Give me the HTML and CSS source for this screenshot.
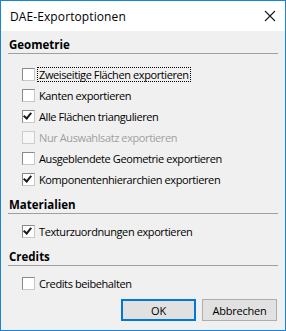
FILE: index.html
```html
<!DOCTYPE html>
<html lang="de">
<head>
    <meta charset="UTF-8">
    <title>DAE-Exportoptionen</title>
    <link rel="stylesheet" href="styles.css">
</head>
<body>
    <div class="window">
        <div class="titlebar">
            <span class="title">DAE-Exportoptionen</span>
            <svg class="close" width="12" height="12" viewBox="0 0 12 12">
                <path d="M1 1 L11 11 M11 1 L1 11" stroke="#1a1a1a" stroke-width="1.1" fill="none"/>
            </svg>
        </div>

        <div class="content">
            <div class="group first">
                <div class="group-title">Geometrie</div>
                <div class="options">
                    <label class="option"><span class="box"></span><span class="text focus">Zweiseitige Flächen exportieren</span></label>
                    <label class="option"><span class="box"></span><span class="text">Kanten exportieren</span></label>
                    <label class="option"><span class="box checked"></span><span class="text">Alle Flächen triangulieren</span></label>
                    <label class="option disabled"><span class="box"></span><span class="text">Nur Auswahlsatz exportieren</span></label>
                    <label class="option"><span class="box"></span><span class="text">Ausgeblendete Geometrie exportieren</span></label>
                    <label class="option"><span class="box checked"></span><span class="text">Komponentenhierarchien exportieren</span></label>
                </div>
            </div>

            <div class="group">
                <div class="group-title">Materialien</div>
                <div class="options">
                    <label class="option"><span class="box checked"></span><span class="text">Texturzuordnungen exportieren</span></label>
                </div>
            </div>

            <div class="group">
                <div class="group-title">Credits</div>
                <div class="options">
                    <label class="option"><span class="box"></span><span class="text">Credits beibehalten</span></label>
                </div>
            </div>

            <div class="buttons">
                <button class="btn default">OK</button>
                <button class="btn">Abbrechen</button>
            </div>
        </div>
    </div>
</body>
</html>
```

FILE: styles.css
```css
*{
    margin: 0;
    padding: 0;
    box-sizing: border-box;
}

body{
    font-family: "Open Sans", "Noto Sans", sans-serif;
    font-size: 11px;
    color: #000;
    background: #f0f0f0;
}

.window{
    width: 286px;
    height: 331px;
    border: 1px solid #1883d7;
    background: #f0f0f0;
}

.titlebar{
    height: 30px;
    background: #fff;
    display: flex;
    align-items: center;
    justify-content: space-between;
    padding: 0 9px 0 9px;
}

.title{
    font-size: 12px;
    letter-spacing: 0.1px;
}

.content{
    padding: 0 7px;
}

.group-title{
    margin-top: 7px;
    height: 17px;
    line-height: 16px;
    font-weight: bold;
    font-size: 11.5px;
    padding-left: 1px;
    border-bottom: 1px solid #a0a0a0;
}

.first .group-title{
    margin-top: 6px;
}

.options{
    padding: 7px 0 0 14px;
}

.first .options{
    padding-top: 10px;
}

.option{
    height: 21px;
    display: flex;
    align-items: center;
}

.box{
    width: 13px;
    height: 13px;
    background: #fff;
    border: 1px solid #8a8a8a;
    border-right-color: #c8c8c8;
    border-bottom-color: #c8c8c8;
    margin-right: 2px;
    position: relative;
}

.box.checked::after{
    content: "";
    position: absolute;
    left: 2px;
    top: 0px;
    width: 3px;
    height: 6px;
    border: solid #1a1a1a;
    border-width: 0 2px 2px 0;
    transform: rotate(40deg);
}

.text{
    padding: 0 1px;
    border: 1px solid transparent;
    line-height: 13px;
    letter-spacing: -0.4px;
}

.text.focus{
    border: 1px dotted #000;
}

.disabled .box{
    border-color: #cdcdcd;
    background: #f7f7f7;
}

.disabled .text{
    color: #a0a0a0;
}

.buttons{
    margin-top: 5px;
    padding-right: 1px;
    display: flex;
    justify-content: flex-end;
    gap: 6px;
}

.btn{
    width: 75px;
    height: 22px;
    font-family: inherit;
    font-size: 11px;
    letter-spacing: -0.2px;
    color: #000;
    background: #e1e1e1;
    border: 1px solid #adadad;
}

.btn.default{
    border: 2px solid #0078d7;
}
```
